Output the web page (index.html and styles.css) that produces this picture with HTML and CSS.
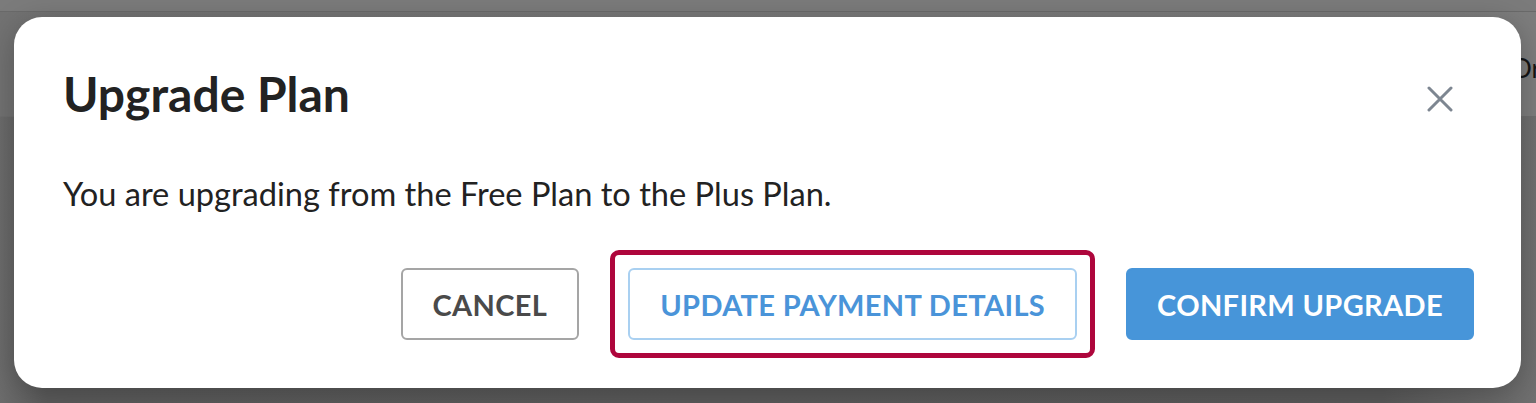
FILE: index.html
```html
<!DOCTYPE html>
<html lang="en">
<head>
    <meta charset="UTF-8">
    <meta name="viewport" content="width=device-width, initial-scale=1.0">
    <title>Upgrade Plan</title>
    <link rel="stylesheet" href="styles.css">
</head>
<body>
    <div class="page">
        <div class="topbar"></div>
        <div class="header"><span class="header-link">Or</span></div>
        <div class="content"></div>
    </div>

    <div class="modal" role="dialog" aria-labelledby="modalTitle">
        <div class="modal-head">
            <h2 id="modalTitle">Upgrade Plan</h2>
            <button class="close" aria-label="Close">
                <svg width="26" height="26" viewBox="0 0 26 26">
                    <path d="M2 2 L24 24 M24 2 L2 24" stroke="#7d8691" stroke-width="3" stroke-linecap="round" fill="none"/>
                </svg>
            </button>
        </div>
        <p class="message">You are upgrading from the Free Plan to the Plus Plan.</p>
        <div class="actions">
            <button class="btn btn-cancel">CANCEL</button>
            <button class="btn btn-outline focused">UPDATE PAYMENT DETAILS</button>
            <button class="btn btn-primary">CONFIRM UPGRADE</button>
        </div>
    </div>
</body>
</html>
```

FILE: styles.css
```css
body { margin: 0; padding: 0; font-family: Lato, "Open Sans", sans-serif; background: #626262; overflow: hidden; }
.page { height: 403px; display: flex; flex-direction: column; }
.topbar { height: 11px; background: #7b7b7b; border-bottom: 1px solid #6a6a6a; }
.header { height: 104px; background: linear-gradient(to right, #727272, #7a7a7a 60%, #7d7d7d); border-bottom: 1px solid #6f6f6f; padding-left: 1511px; overflow: hidden; white-space: nowrap; }
.header-link { display: block; margin-top: 40px; font-size: 26px; color: #151515; }
.content { flex: 1; background: linear-gradient(to right, #6c6c6c, #5c5c5c 3%, #5a5a5a 90%, #707070); }

.modal { position: absolute; left: 14px; top: 17px; width: 1507px; height: 371px; box-sizing: border-box; background: white; border-radius: 28px; padding: 0 47px 0 49px; box-shadow: 0 6px 30px rgba(0, 0, 0, 0.25); }
.modal-head { display: flex; justify-content: space-between; align-items: flex-start; margin-top: 48px; }
.modal-head h2 { margin: 0; font-size: 48px; font-weight: 700; line-height: 58px; color: #222; }
.close { background: none; border: none; padding: 0; margin-right: 21px; margin-top: 21px; width: 26px; height: 26px; cursor: pointer; }
.close svg { display: block; }
.message { margin: 52px 0 0; font-size: 32.6px; line-height: 38px; color: #222; }

.actions { display: flex; justify-content: flex-end; gap: 49px; margin-top: 55px; }
.btn { height: 72px; padding: 0 30px; border-radius: 6px; font-family: Lato, sans-serif; font-size: 29px; font-weight: 700; letter-spacing: 0.35px; background: white; cursor: pointer; }
.btn-cancel { border: 2px solid #a5a5a5; color: #4a4a4a; }
.btn-outline { border: 2px solid #a9d0f1; color: #4a94d9; position: relative; }
.btn-outline.focused::after { content: ""; position: absolute; inset: -20px; border: 5px solid #ae063c; border-radius: 9px; }
.btn-primary { border: 2px solid #4795d9; background: #4795d9; color: white; padding: 0 29px; }
```
